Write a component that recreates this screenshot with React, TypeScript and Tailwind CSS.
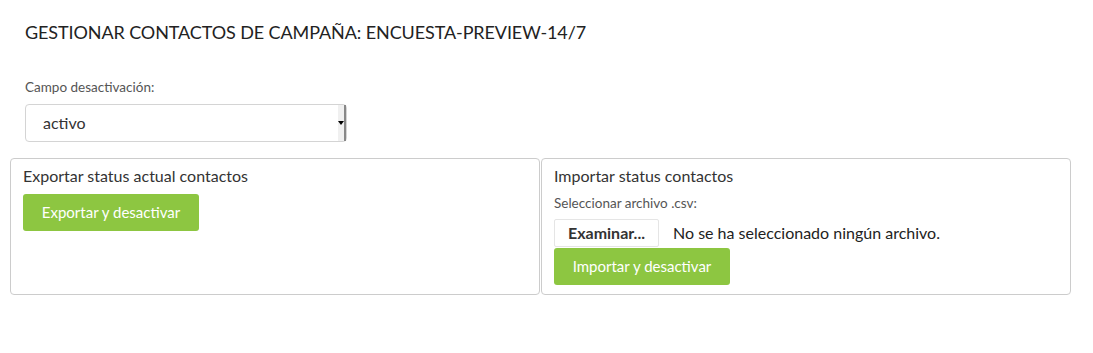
import React from "react";

export default function App() {
  const font = { fontFamily: "Lato, 'Noto Sans', sans-serif" };
  return (
    <div className="w-[1093px] h-[353px] bg-white text-[#333]" style={font}>
      <div className="pt-[22px] pl-[25px]">
        <h1 className="text-[18px] leading-[20px] text-[#222] tracking-[-0.1px]">
          GESTIONAR CONTACTOS DE CAMPAÑA: ENCUESTA-PREVIEW-14/7
        </h1>
        <div className="mt-[37px] text-[13.5px] leading-[16px] text-[#555]">Campo desactivación:</div>
        <div className="mt-[9px] w-[322px] h-[38px] border border-[#d4d4d4] rounded-[4px] flex items-center justify-between pl-[17px] pr-[0px]">
          <span className="text-[16px] text-[#333]">activo</span>
          <div className="w-[8px] h-[36px] bg-[#f0f0f0] border-r-2 border-[#888] flex items-center justify-center">
            <div className="w-0 h-0 border-l-[3px] border-r-[3px] border-t-[4px] border-l-transparent border-r-transparent border-t-black" />
          </div>
        </div>
      </div>
      <div className="mt-[16px] ml-[10px] flex gap-[1px] w-[1061px]">
        <div className="flex-1 h-[137px] border border-[#ccc] rounded-[4px] pl-[12px] pt-[7px]">
          <div className="text-[16px] leading-[19px] text-[#333]">Exportar status actual contactos</div>
          <button className="mt-[9px] w-[176px] h-[37px] bg-[#8dc641] rounded-[3px] text-white text-[15px]">
            Exportar y desactivar
          </button>
        </div>
        <div className="flex-1 h-[137px] border border-[#ccc] rounded-[4px] pl-[12px] pt-[7px]">
          <div className="text-[16px] leading-[19px] text-[#333]">Importar status contactos</div>
          <div className="mt-[10px] text-[13.5px] leading-[16px] text-[#555]">Seleccionar archivo .csv:</div>
          <div className="mt-[8px] flex items-center">
            <div className="w-[105px] h-[28px] border border-[#e5e5e5] rounded-[2px] bg-white flex items-center justify-center text-[16px] font-bold text-[#333]">
              Examinar...
            </div>
            <span className="ml-[14px] text-[16px] text-[#222]">No se ha seleccionado ningún archivo.</span>
          </div>
          <button className="mt-[1px] w-[176px] h-[37px] bg-[#8dc641] rounded-[3px] text-white text-[15px]">
            Importar y desactivar
          </button>
        </div>
      </div>
    </div>
  );
}
